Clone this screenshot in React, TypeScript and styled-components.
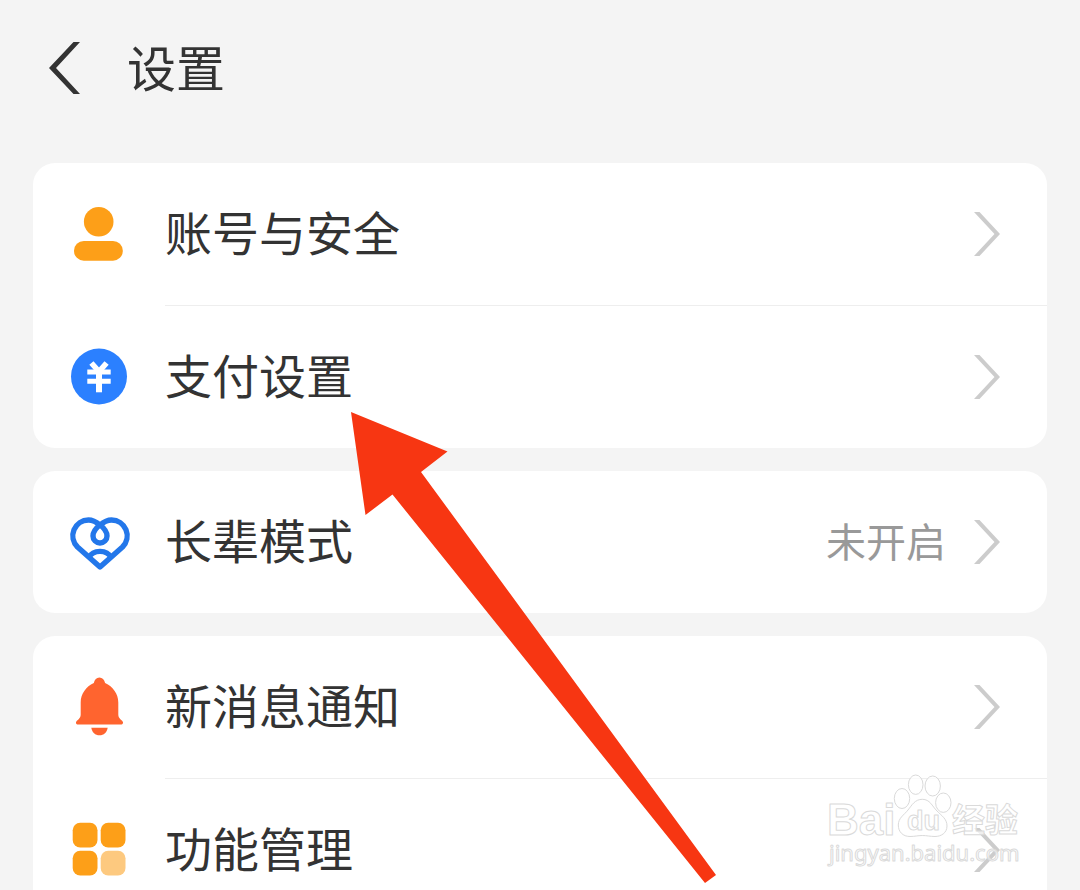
import React from "react";
import styled, { createGlobalStyle } from "styled-components";

const GlobalStyle = createGlobalStyle`
  *, *::before, *::after { box-sizing: border-box; }
  body {
    margin: 0;
    background: #f4f4f4;
    color: #333;
    font-family: "Noto Sans CJK SC", "Noto Sans", sans-serif;
  }
`;

const Page = styled.div`
  position: relative;
  height: 100vh;
  overflow: hidden;
  background: #f4f4f4;
`;

const Header = styled.header`
  display: flex;
  align-items: center;
  gap: 47px;
  height: 136px;
  padding-left: 49px;
`;

const BackButton = styled.button`
  display: flex;
  padding: 0;
  border: 0;
  background: none;
  color: #333;
  cursor: pointer;
`;

const Title = styled.h1`
  margin: 0;
  padding-bottom: 4px;
  font-size: 49px;
  line-height: 64px;
  font-weight: 400;
`;

const Groups = styled.main`
  display: flex;
  flex-direction: column;
  gap: 23px;
  padding: 27px 33px;
`;

const Card = styled.ul`
  margin: 0;
  padding: 0;
  list-style: none;
  background: #fff;
  border-radius: 22px;
`;

const RowLink = styled.a`
  display: flex;
  align-items: center;
  gap: 36px;
  padding-left: 36px;
  color: inherit;
  text-decoration: none;
`;

const RowBody = styled.span<{ $divided: boolean }>`
  display: flex;
  flex: 1;
  align-items: center;
  gap: 28px;
  padding-right: 47px;
  border-top: ${(p) => (p.$divided ? "1px solid #eee" : "0")};
`;

const Label = styled.span`
  flex: 1;
  padding-bottom: 6px;
  font-size: 47px;
  line-height: 136px;
`;

const Value = styled.span`
  padding-bottom: 4px;
  color: #999;
  font-size: 40px;
  line-height: 60px;
`;

const Glyph = styled.svg`
  display: block;
  flex: none;
`;

const Pointer = styled.svg`
  position: absolute;
  top: 412px;
  left: 351px;
  pointer-events: none;
`;

const Watermark = styled.svg`
  position: absolute;
  right: 50px;
  bottom: 10px;
  pointer-events: none;
`;

const UserIcon = () => (
  <Glyph width="60" height="60" viewBox="0 0 60 60" fill="#fd9f18" aria-hidden="true">
    <circle cx="29.7" cy="17.7" r="14.8" />
    <rect x="5" y="37" width="48.8" height="19.7" rx="9.8" />
  </Glyph>
);

const PayIcon = () => (
  <Glyph width="60" height="60" viewBox="0 0 60 60" fill="none" stroke="#fff" aria-hidden="true">
    <circle cx="30" cy="29.5" r="28" fill="#2b80ff" stroke="none" />
    <path d="M22.4 16 30 24.5 37.6 16" strokeWidth="5.6" />
    <path d="M18.3 25h23.4M18.3 34.2h23.4" strokeWidth="5" />
    <path d="M30 24v21.3" strokeWidth="6" />
  </Glyph>
);

const HeartIcon = () => (
  <Glyph width="60" height="60" viewBox="0 0 60 60" overflow="visible" fill="none" stroke="#2377ea" strokeWidth="5.4" strokeLinejoin="round" aria-hidden="true">
    <path d="M31 55 8.5 35A15.8 15.8 0 0 1 19.5 8C26 8 38 16 38 24a7 7 0 0 1-14 0C24 16 36 8 42.5 8A15.8 15.8 0 0 1 53.5 35Z" />
    <path d="M20 45.5C24 37.300 38 37.300 42 45.5" />
  </Glyph>
);

const BellIcon = () => (
  <Glyph width="60" height="60" viewBox="0 0 60 60" fill="#ff642f" aria-hidden="true">
    <path d="M24.8 6C25.5 2.5 27.5.4 30.4.4s5 2.1 5.7 5.6C44 9.5 49.3 17 49.3 25.5V37.5c0 2 .8 3.5 2.3 4.9l1.500 1.400c1.700 1.700 1 3.800-1.300 3.800H9.200c-2.300 0-3-2.100-1.300-3.800l1.500-1.400c1.500-1.400 2.300-2.900 2.300-4.900V25.5C11.700 17 17 9.5 24.8 6Z" />
    <path d="M22.3 50.7h16.4c-.6 4.5-4 7.6-8.2 7.6s-7.6-3.1-8.2-7.6Z" />
  </Glyph>
);

const GridIcon = () => (
  <Glyph width="60" height="60" viewBox="0 0 60 60" fill="#fd9f18" aria-hidden="true">
    <rect x="3.7" y="2.7" width="24.8" height="24.8" rx="7.5" />
    <rect x="31.7" y="2.7" width="24.8" height="24.8" rx="7.5" />
    <rect x="3.7" y="30.7" width="24.8" height="24.8" rx="7.5" />
    <rect x="31.7" y="30.7" width="24.8" height="24.8" rx="7.5" fill="#fdc97f" />
  </Glyph>
);

const Chevron = () => (
  <Glyph width="26" height="44" viewBox="0 0 26 44" fill="#ccc" aria-hidden="true">
    <path d="M0 0h5.5L26 22 5.5 44H0L20.5 22Z" />
  </Glyph>
);

type Item = { label: string; value?: string; icon: () => React.JSX.Element };

const groups: Item[][] = [
  [
    { label: "账号与安全", icon: UserIcon },
    { label: "支付设置", icon: PayIcon },
  ],
  [{ label: "长辈模式", value: "未开启", icon: HeartIcon }],
  [
    { label: "新消息通知", icon: BellIcon },
    { label: "功能管理", icon: GridIcon },
  ],
];

export default function App() {
  return (
    <Page>
      <GlobalStyle />
      <Header>
        <BackButton type="button" aria-label="返回">
          <Glyph width="31" height="52" viewBox="0 0 31 52" fill="currentColor" aria-hidden="true">
            <path d="M31 0h-6.5L0 26l24.5 26H31L7 26Z" />
          </Glyph>
        </BackButton>
        <Title>设置</Title>
      </Header>
      <Groups>
        {groups.map((items) => (
          <Card key={items[0].label}>
            {items.map(({ label, value, icon: Icon }, i) => (
              <li key={label}>
                <RowLink href="#">
                  <Icon />
                  <RowBody $divided={i > 0}>
                    <Label>{label}</Label>
                    {value && <Value>{value}</Value>}
                    <Chevron />
                  </RowBody>
                </RowLink>
              </li>
            ))}
          </Card>
        ))}
      </Groups>
      <Watermark width="210" height="110" viewBox="0 0 210 110" fill="#fff" fillOpacity="0.7" stroke="#dadada" strokeWidth="1" strokeLinejoin="round" aria-hidden="true">
        <text x="7" y="65" fontSize="44" fontWeight="700" fontFamily="Liberation Sans, sans-serif">Bai</text>
        <ellipse cx="82" cy="28.5" rx="7.7" ry="10" />
        <ellipse cx="95.7" cy="14.7" rx="7.3" ry="9.7" />
        <ellipse cx="112.7" cy="16" rx="7.7" ry="10" />
        <ellipse cx="123.3" cy="32.7" rx="7.7" ry="9.7" />
        <path d="M102.3 29.3C110 29.3 112 36 117 41C122 46 127 49 127 56C127 63 121 66.5 115 66.5C110 66.5 107 65.5 102.3 65.5S95 66.5 90 66.5C83 66.5 78.3 62 78.3 55C78.3 48 84 45 88 40C92 35 95 29.3 102.3 29.3Z" />
        <text x="87" y="60" fontSize="27" fontWeight="700" fontFamily="Liberation Sans, sans-serif">du</text>
        <text x="132" y="62" fontSize="33" fontWeight="700" fontFamily="Noto Sans CJK SC, sans-serif">经验</text>
        <text x="9" y="91" fontSize="22" fontFamily="Noto Sans, sans-serif">jingyan.baidu.com</text>
      </Watermark>
      <Pointer width="366" height="472" viewBox="0 0 366 472" fill="#f73612" aria-hidden="true">
        <path d="M0 0 96.5 39.5 70 60 365 463 354 471 41.5 82.5 14.5 103Z" />
      </Pointer>
    </Page>
  );
}
